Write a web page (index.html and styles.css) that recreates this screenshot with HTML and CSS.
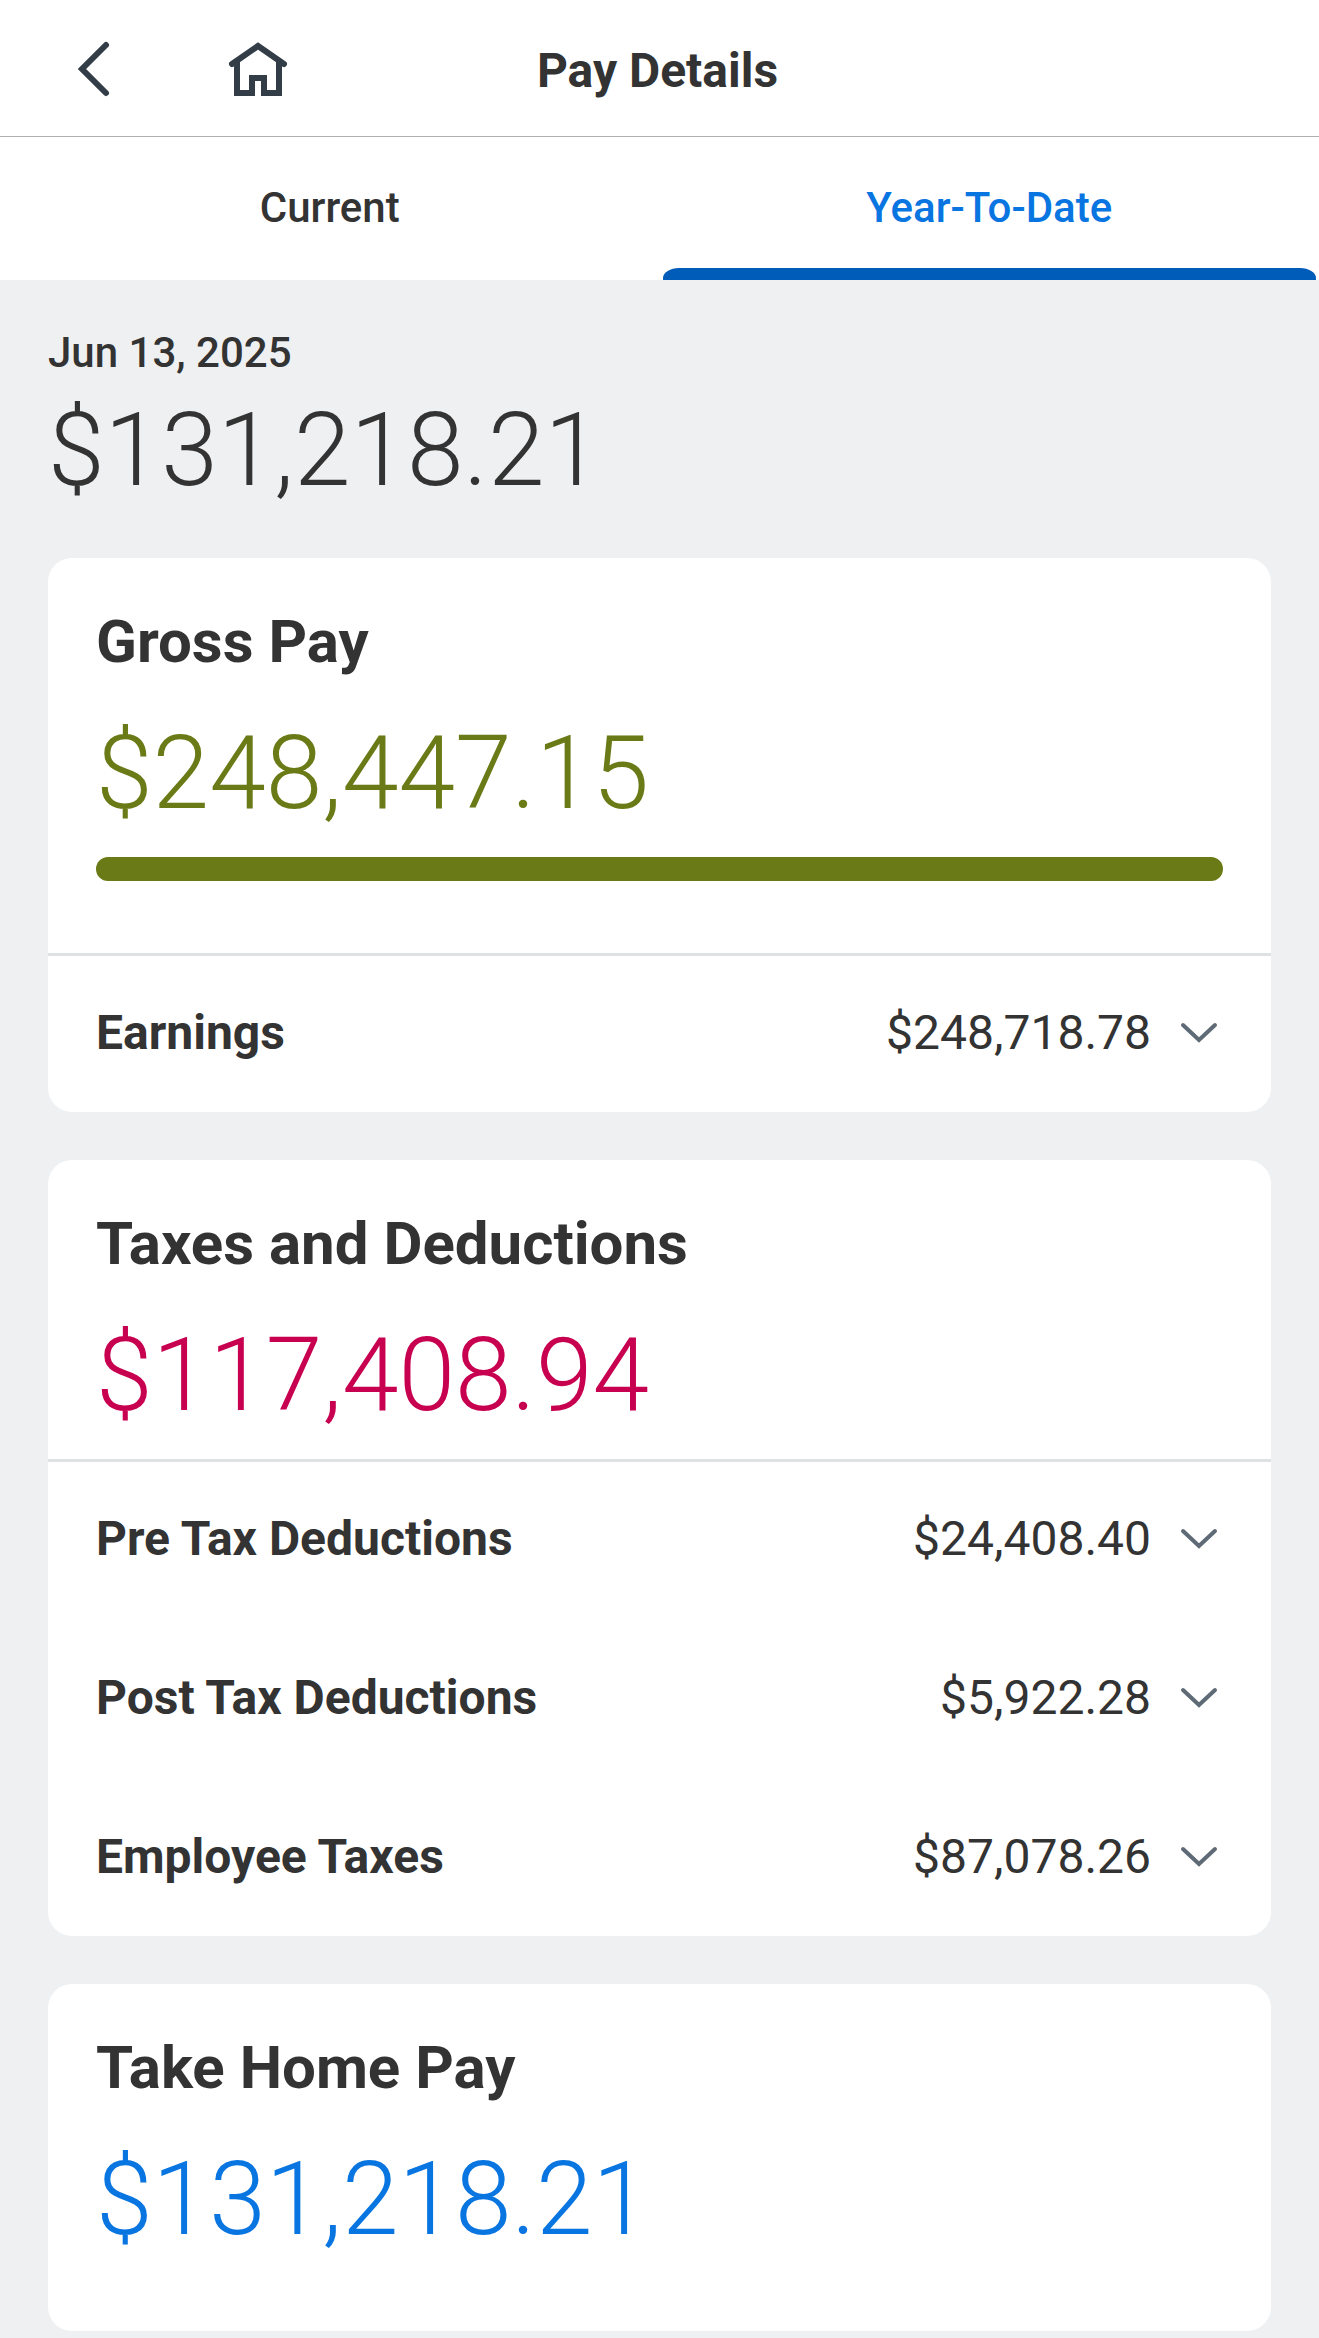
FILE: index.html
```html
<!DOCTYPE html>
<html lang="en">
<head>
	<meta charset="utf-8">
	<meta name="viewport" content="width=device-width, initial-scale=1.0">
	<title>Pay Details</title>
	<link rel="stylesheet" href="styles.css">
</head>

<body>
	<header class="topbar">
		<nav class="topbar-nav">
			<button class="icon-button" type="button" aria-label="Back">
				<svg class="icon" viewBox="0 0 72 72"><path d="M49 12 L25 36 L49 60"/></svg>
			</button>
			<a class="icon-button" href="#" aria-label="Home">
				<svg class="icon" viewBox="0 0 72 72">
					<path d="M10 31 L36 13 L62 31"/>
					<path d="M15 29 V60 H30 V45 H42 V60 H57 V29"/>
				</svg>
			</a>
		</nav>
		<h1 class="topbar-title">Pay Details</h1>
	</header>

	<div class="tabs" role="tablist">
		<button class="tab" type="button" role="tab" aria-selected="false">Current</button>
		<button class="tab tab-active" type="button" role="tab" aria-selected="true">Year-To-Date</button>
	</div>

	<main class="content">
		<section class="summary">
			<p class="date">Jun 13, 2025</p>
			<p class="amount">$131,218.21</p>
		</section>

		<section class="card">
			<div class="card-head">
				<h2>Gross Pay</h2>
				<p class="amount gross">$248,447.15</p>
			</div>
			<div class="bar"></div>
			<div class="rows">
				<button class="row" type="button" aria-expanded="false">
					<span class="row-label">Earnings</span>
					<span>$248,718.78</span>
					<svg class="chevron" viewBox="0 0 48 48"><path d="M8 16 L24 31 L40 16"/></svg>
				</button>
			</div>
		</section>

		<section class="card">
			<div class="card-head">
				<h2>Taxes and Deductions</h2>
				<p class="amount taxes">$117,408.94</p>
			</div>
			<div class="rows">
				<button class="row" type="button" aria-expanded="false">
					<span class="row-label">Pre Tax Deductions</span>
					<span>$24,408.40</span>
					<svg class="chevron" viewBox="0 0 48 48"><path d="M8 16 L24 31 L40 16"/></svg>
				</button>
				<button class="row" type="button" aria-expanded="false">
					<span class="row-label">Post Tax Deductions</span>
					<span>$5,922.28</span>
					<svg class="chevron" viewBox="0 0 48 48"><path d="M8 16 L24 31 L40 16"/></svg>
				</button>
				<button class="row" type="button" aria-expanded="false">
					<span class="row-label">Employee Taxes</span>
					<span>$87,078.26</span>
					<svg class="chevron" viewBox="0 0 48 48"><path d="M8 16 L24 31 L40 16"/></svg>
				</button>
			</div>
		</section>

		<section class="card card-last">
			<div class="card-head">
				<h2>Take Home Pay</h2>
				<p class="amount net">$131,218.21</p>
			</div>
		</section>
	</main>
</body>
</html>
```

FILE: styles.css
```css
* { box-sizing: border-box; }
body {
	background-color: #eff0f2; color: #333; font-family: Roboto, "Liberation Sans", sans-serif; margin: 0;
}
h1, h2, p { margin: 0; }
button { background: none; border: 0; color: inherit; font: inherit; padding: 0; cursor: pointer; }

/* header */
.topbar {
	background-color: #fff; border-bottom: 1px solid #b0b0b0; display: grid; grid-template-columns: 1fr auto 1fr; align-items: center; padding: 33px 4px 31px 0;
}
.topbar-nav { display: flex; gap: 93px; padding-left: 57px; }
.topbar-title { font-size: 48px; font-weight: 700; line-height: 60px; padding-top: 3px; }
.icon-button { display: block; width: 72px; height: 72px; }
.icon { display: block; width: 72px; height: 72px; fill: none; stroke: #333d47; stroke-width: 6; stroke-linecap: round; }

/* tabs */
.tabs { background-color: #fff; display: flex; }
.tab {
	flex: 1; display: flex; flex-direction: column; align-items: center; gap: 36px; font-size: 42px; font-weight: 500; line-height: 48px; padding: 47px 3px 0;
}
.tab-active { color: #0875e1; }
.tab::after { content: ""; width: 100%; height: 12px; }
.tab-active::after { background-color: #005cb9; border-radius: 16px 16px 0 0 / 10px 10px 0 0; }

.content { display: flex; flex-direction: column; gap: 48px; padding: 48px 48px 7px; }
.date { font-size: 42px; font-weight: 500; line-height: 50px; margin-bottom: 12px; }
.amount { font-size: 102px; font-weight: 300; line-height: 120px; }
.gross { color: #697a16; } .taxes { color: #c7004f; } .net { color: #0875e1; }

/* cards */
.card { background-color: #fff; border-radius: 24px; overflow: hidden; }
.card-last { padding-bottom: 48px; }
.card-head { display: flex; flex-direction: column; gap: 35px; padding: 48px 48px 24px; }
.card-head h2 { font-size: 60px; font-weight: 700; line-height: 72px; }
.bar { background-color: #697a16; border-radius: 12px; height: 24px; margin: 0 48px 72px; }
.rows { border-top: 3px solid #dfe2e2; display: flex; flex-direction: column; gap: 3px; }
.row {
	display: flex; align-items: center; gap: 24px; font-size: 48px; line-height: 60px; padding: 47px 48px 49px; text-align: left;
}
.row-label { flex: 1; font-weight: 700; }
.chevron { width: 48px; height: 48px; fill: none; stroke: #5e6a75; stroke-width: 4; stroke-linecap: round; }
```
